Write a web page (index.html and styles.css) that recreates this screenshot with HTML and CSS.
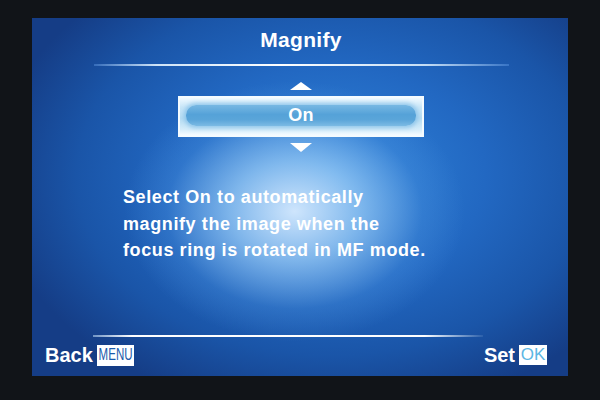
FILE: index.html
```html
<!DOCTYPE html>
<html lang="en">

<head>
    <meta charset="UTF-8">
    <title>Magnify</title>
    <link rel="stylesheet" href="styles.css">
</head>

<body>

    <div class="screen">
        <div class="title">Magnify</div>
        <div class="rule rule-top"></div>

        <!-- Выбор значения -->
        <div class="picker">
            <svg class="arrow" width="22" height="8" viewBox="0 0 22 8">
                <polygon points="11,0 22,8 0,8" fill="#fff"/>
            </svg>
            <div class="option"><span class="option-band">On</span></div>
            <svg class="arrow" width="22" height="9" viewBox="0 0 22 9">
                <polygon points="0,0 22,0 11,9" fill="#fff"/>
            </svg>
        </div>

        <p class="hint">Select On to automatically<br>magnify the image when the<br>focus ring is rotated in MF mode.</p>

        <div class="rule rule-bottom"></div>
        <div class="footer">
            <div class="action">Back <span class="key key-menu"><span>MENU</span></span></div>
            <div class="action">Set <span class="key key-ok">OK</span></div>
        </div>
    </div>

</body>

</html>
```

FILE: styles.css
```css
body, html {
    margin: 0;
    padding: 0;
    width: 600px;
    height: 400px;
    background: #111418;
    overflow: hidden;
    font-family: "Liberation Sans", Arial, sans-serif;
    color: white;
}

body {
    padding-top: 18px;
    box-sizing: border-box;
}

.screen {
    margin-left: 32px;
    width: 536px;
    height: 358px;
    box-sizing: border-box;
    padding: 10px 0 10px;
    display: flex;
    flex-direction: column;
    background:
        radial-gradient(ellipse 170px 130px at 49% 54%, rgba(215, 235, 255, 0.95) 0%, rgba(160, 208, 248, 0.72) 38%, rgba(80, 150, 225, 0.3) 75%, rgba(40, 110, 205, 0) 100%),
        radial-gradient(ellipse 340px 240px at 56% 44%, #3084da 0%, #2268c2 45%, #1a55a8 75%, #153d86 100%);
}

.title {
    font-size: 21px;
    line-height: 24px;
    font-weight: bold;
    text-align: center;
    margin-left: 2px;
    letter-spacing: 0.3px;
}

.rule {
    height: 2px;
}

.rule-top {
    margin: 12px 0 0 62px;
    width: 415px;
    background: linear-gradient(to right, rgba(120, 180, 255, 0.3), rgba(225, 242, 255, 0.9) 15%, #fff 45%, rgba(225, 242, 255, 0.85) 80%, rgba(120, 180, 255, 0.3));
}

.picker {
    margin-top: 16px;
    display: flex;
    flex-direction: column;
    align-items: center;
    gap: 6px;
    padding-left: 2px;
}

.arrow {
    display: block;
}

.option {
    width: 246px;
    height: 41px;
    box-sizing: border-box;
    border: 2px solid #f4fbff;
    padding: 7px 6px 9px;
    background: linear-gradient(to bottom, #f0f9ff 0%, #c9e6f8 25%, #b6dcf3 55%, #d6edfa 85%, #f4fbff 100%);
    display: flex;
}

.option-band {
    flex: 1;
    border-radius: 10px;
    background: linear-gradient(to bottom, #78b8e3 0%, #55a2d8 45%, #5aa5d9 70%, #7cbbe4 100%);
    box-shadow: 0 0 4px 2px rgba(120, 185, 230, 0.7);
    font-size: 18px;
    font-weight: bold;
    line-height: 21px;
    text-align: center;
    letter-spacing: 0.3px;
}

.hint {
    margin: 32px 0 0 91px;
    font-size: 18px;
    line-height: 26.5px;
    font-weight: bold;
    letter-spacing: 0.6px;
}

.rule-bottom {
    margin: auto 0 7px 61px;
    width: 390px;
    background: linear-gradient(to right, rgba(200, 230, 255, 0.5), #fff 10%, #fff 85%, rgba(200, 230, 255, 0.1));
}

.footer {
    display: flex;
    justify-content: space-between;
    padding: 0 21px 0 13px;
    height: 22px;
}

.action {
    display: flex;
    align-items: center;
    gap: 4px;
    font-size: 20px;
    font-weight: bold;
    line-height: 22px;
}

.key {
    background: #fff;
    display: flex;
    align-items: center;
    justify-content: center;
    font-weight: normal;
}

.key-menu {
    width: 37px;
    height: 21px;
    color: #1b5bab;
}

.key-menu span {
    display: inline-block;
    font-size: 16px;
    transform: scaleX(0.72);
}

.key-ok {
    width: 28px;
    height: 20px;
    color: #5cb6e4;
    font-size: 17px;
}
```
